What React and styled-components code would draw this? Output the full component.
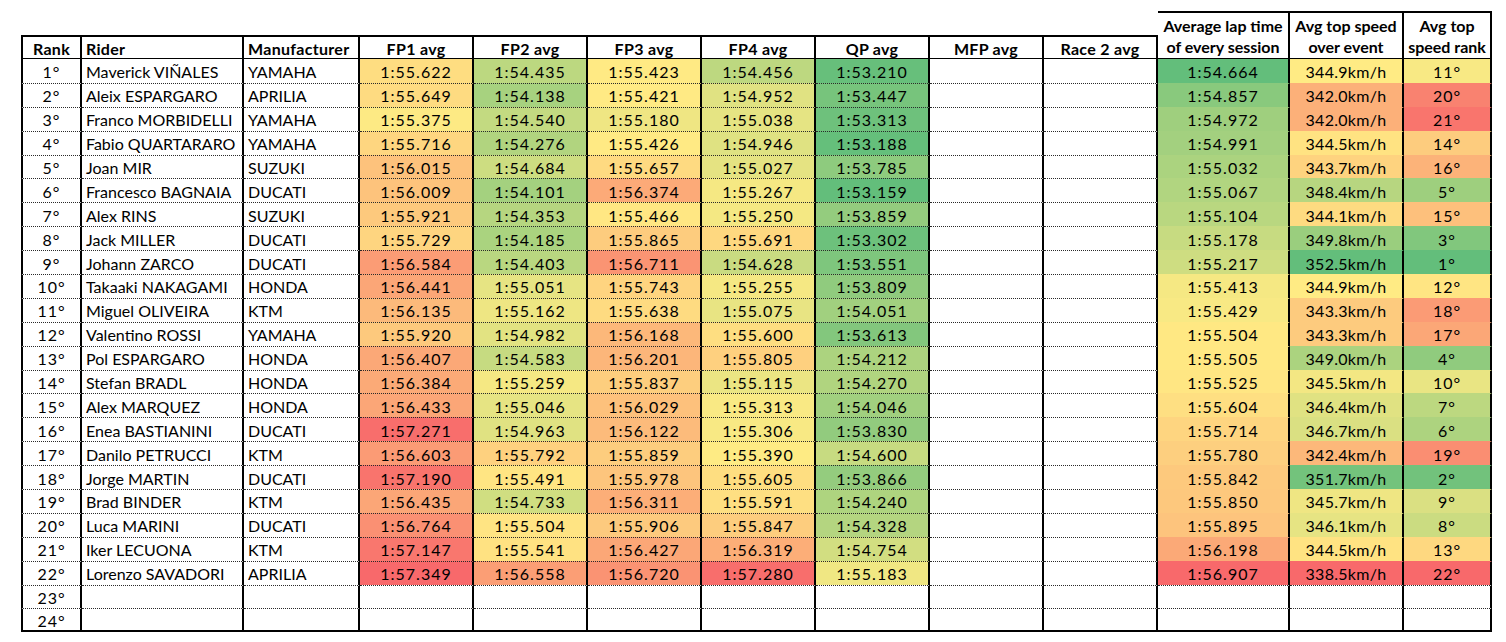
import React from "react";
import styled, { createGlobalStyle, css } from "styled-components";

const GlobalStyle = createGlobalStyle`
  html, body { margin: 0; padding: 0; background: #ffffff; }
  body { font-family: Lato, "Open Sans", Arial, sans-serif; color: #000; }
`;

const riders = [
  [1, "Maverick VIÑALES", "YAMAHA", "1:55.622", "1:54.435", "1:55.423", "1:54.456", "1:53.210", "1:54.664", "344.9", 11],
  [2, "Aleix ESPARGARO", "APRILIA", "1:55.649", "1:54.138", "1:55.421", "1:54.952", "1:53.447", "1:54.857", "342.0", 20],
  [3, "Franco MORBIDELLI", "YAMAHA", "1:55.375", "1:54.540", "1:55.180", "1:55.038", "1:53.313", "1:54.972", "342.0", 21],
  [4, "Fabio QUARTARARO", "YAMAHA", "1:55.716", "1:54.276", "1:55.426", "1:54.946", "1:53.188", "1:54.991", "344.5", 14],
  [5, "Joan MIR", "SUZUKI", "1:56.015", "1:54.684", "1:55.657", "1:55.027", "1:53.785", "1:55.032", "343.7", 16],
  [6, "Francesco BAGNAIA", "DUCATI", "1:56.009", "1:54.101", "1:56.374", "1:55.267", "1:53.159", "1:55.067", "348.4", 5],
  [7, "Alex RINS", "SUZUKI", "1:55.921", "1:54.353", "1:55.466", "1:55.250", "1:53.859", "1:55.104", "344.1", 15],
  [8, "Jack MILLER", "DUCATI", "1:55.729", "1:54.185", "1:55.865", "1:55.691", "1:53.302", "1:55.178", "349.8", 3],
  [9, "Johann ZARCO", "DUCATI", "1:56.584", "1:54.403", "1:56.711", "1:54.628", "1:53.551", "1:55.217", "352.5", 1],
  [10, "Takaaki NAKAGAMI", "HONDA", "1:56.441", "1:55.051", "1:55.743", "1:55.255", "1:53.809", "1:55.413", "344.9", 12],
  [11, "Miguel OLIVEIRA", "KTM", "1:56.135", "1:55.162", "1:55.638", "1:55.075", "1:54.051", "1:55.429", "343.3", 18],
  [12, "Valentino ROSSI", "YAMAHA", "1:55.920", "1:54.982", "1:56.168", "1:55.600", "1:53.613", "1:55.504", "343.3", 17],
  [13, "Pol ESPARGARO", "HONDA", "1:56.407", "1:54.583", "1:56.201", "1:55.805", "1:54.212", "1:55.505", "349.0", 4],
  [14, "Stefan BRADL", "HONDA", "1:56.384", "1:55.259", "1:55.837", "1:55.115", "1:54.270", "1:55.525", "345.5", 10],
  [15, "Alex MARQUEZ", "HONDA", "1:56.433", "1:55.046", "1:56.029", "1:55.313", "1:54.046", "1:55.604", "346.4", 7],
  [16, "Enea BASTIANINI", "DUCATI", "1:57.271", "1:54.963", "1:56.122", "1:55.306", "1:53.830", "1:55.714", "346.7", 6],
  [17, "Danilo PETRUCCI", "KTM", "1:56.603", "1:55.792", "1:55.859", "1:55.390", "1:54.600", "1:55.780", "342.4", 19],
  [18, "Jorge MARTIN", "DUCATI", "1:57.190", "1:55.491", "1:55.978", "1:55.605", "1:53.866", "1:55.842", "351.7", 2],
  [19, "Brad BINDER", "KTM", "1:56.435", "1:54.733", "1:56.311", "1:55.591", "1:54.240", "1:55.850", "345.7", 9],
  [20, "Luca MARINI", "DUCATI", "1:56.764", "1:55.504", "1:55.906", "1:55.847", "1:54.328", "1:55.895", "346.1", 8],
  [21, "Iker LECUONA", "KTM", "1:57.147", "1:55.541", "1:56.427", "1:56.319", "1:54.754", "1:56.198", "344.5", 13],
  [22, "Lorenzo SAVADORI", "APRILIA", "1:57.349", "1:56.558", "1:56.720", "1:57.280", "1:55.183", "1:56.907", "338.5", 22],
];

const TOTAL_ROWS = 24;

const toSec = (t) => {
  const [m, s] = t.split(":");
  return Number(m) * 60 + Number(s);
};

const median = (arr) => {
  const s = [...arr].sort((a, b) => a - b);
  const n = s.length;
  return n % 2 ? s[(n - 1) / 2] : (s[n / 2 - 1] + s[n / 2]) / 2;
};

const GREEN = [99, 190, 123];
const YELLOW = [255, 235, 132];
const RED = [248, 105, 107];

const mix = (a, b, t) => a.map((v, i) => Math.round(v + (b[i] - v) * t));

// 3-colour scale: min / median / max like a spreadsheet colour scale
const makeScale = (values, lowIsGood) => {
  const lo = Math.min(...values);
  const hi = Math.max(...values);
  const mid = median(values);
  const lowC = lowIsGood ? GREEN : RED;
  const highC = lowIsGood ? RED : GREEN;
  return (v) => {
    let c;
    if (v <= mid) c = mix(lowC, YELLOW, mid === lo ? 1 : (v - lo) / (mid - lo));
    else c = mix(YELLOW, highC, hi === mid ? 1 : (v - mid) / (hi - mid));
    return `rgb(${c[0]}, ${c[1]}, ${c[2]})`;
  };
};

const sessionValues = riders.flatMap((r) => r.slice(3, 8).map(toSec));
const sessionScale = makeScale(sessionValues, true);
const avgScale = makeScale(riders.map((r) => toSec(r[8])), true);
const speedScale = makeScale(riders.map((r) => Number(r[9])), false);
const rankScale = makeScale(riders.map((r) => r[10]), true);

const Page = styled.div`
  padding: 11px 0 0 21px;
`;

const Sheet = styled.div`
  display: grid;
  grid-template-columns: 61px 162px 116px repeat(7, 114px) 132px 114px 88px;
  grid-template-rows: 24px 24px repeat(${TOTAL_ROWS}, 23.9px);
  width: max-content;
`;

const HeaderGap = styled.div`
  grid-column: 1 / span 10;
  grid-row: 1;
`;

const alignMap = { left: "flex-start", center: "center" };

const cellBase = css`
  box-sizing: border-box;
  display: flex;
  align-items: center;
  justify-content: ${(p) => alignMap[p.$align || "center"]};
  padding: ${(p) => (p.$align === "left" ? "0 4px" : "0")};
  border-right: 2px solid #000;
  border-left: ${(p) => (p.$first ? "2px solid #000" : "none")};
  white-space: nowrap;
  overflow: hidden;
`;

const HeadCell = styled.div`
  ${cellBase};
  grid-row: ${(p) => (p.$tall ? "1 / span 2" : "2")};
  border-top: 2px solid #000;
  border-bottom: 1px solid #000;
  font-size: 16px;
  font-weight: 700;
  letter-spacing: ${(p) => (p.$tall ? "0" : "0.3px")};
  line-height: 21px;
  text-align: center;
  padding-top: 1px;
`;

const Cell = styled.div`
  ${cellBase};
  font-size: 16px;
  letter-spacing: ${(p) => p.$spacing || "0"};
  line-height: 1;
  padding-top: 2px;
  background: ${(p) => p.$bg || "transparent"};
  border-top: ${(p) =>
    p.$top === "none" ? "none" : p.$top === "clear" ? "1px solid transparent" : "1px dotted #2a2a2a"};
  border-bottom: ${(p) => (p.$bottom ? "2px solid #000" : "none")};
`;

const headers = [
  { label: "Rank", align: "center" },
  { label: "Rider", align: "left" },
  { label: "Manufacturer", align: "left" },
  { label: "FP1 avg" },
  { label: "FP2 avg" },
  { label: "FP3 avg" },
  { label: "FP4 avg" },
  { label: "QP avg" },
  { label: "MFP avg" },
  { label: "Race 2 avg" },
];

const tallHeaders = [
  ["Average lap time", "of every session"],
  ["Avg top speed", "over event"],
  ["Avg top", "speed rank"],
];

const NUM = "1px";

export default function App() {
  const rows = Array.from({ length: TOTAL_ROWS }, (_, i) => riders[i] || null);

  return (
    <Page>
      <GlobalStyle />
      <Sheet>
        <HeaderGap />
        {tallHeaders.map((lines, i) => (
          <HeadCell key={`t${i}`} $tall style={{ gridColumn: 11 + i }}>
            {lines[0]}
            <br />
            {lines[1]}
          </HeadCell>
        ))}
        {headers.map((h, i) => (
          <HeadCell key={h.label} $align={h.align} $first={i === 0} style={{ gridColumn: i + 1 }}>
            {h.label}
          </HeadCell>
        ))}

        {rows.map((r, ri) => {
          const rank = ri + 1;
          const top = ri === 0 ? "none" : "dotted";
          const bottom = ri === TOTAL_ROWS - 1;
          const prevColoured = ri > 0 && !!rows[ri - 1];
          const summaryTop = ri === 0 ? "none" : r && prevColoured ? "clear" : "dotted";
          const sessions = r ? r.slice(3, 8) : ["", "", "", "", ""];
          return (
            <React.Fragment key={rank}>
              <Cell $first $top={top} $bottom={bottom} $spacing={NUM}>
                {rank}°
              </Cell>
              <Cell $align="left" $top={top} $bottom={bottom}>
                {r ? r[1] : ""}
              </Cell>
              <Cell $align="left" $top={top} $bottom={bottom}>
                {r ? r[2] : ""}
              </Cell>
              {sessions.map((t, si) => (
                <Cell
                  key={si}
                  $top={top}
                  $bottom={bottom}
                  $spacing={NUM}
                  $bg={t ? sessionScale(toSec(t)) : undefined}
                >
                  {t}
                </Cell>
              ))}
              <Cell $top={top} $bottom={bottom} />
              <Cell $top={top} $bottom={bottom} />
              <Cell $top={summaryTop} $bottom={bottom} $spacing={NUM} $bg={r ? avgScale(toSec(r[8])) : undefined}>
                {r ? r[8] : ""}
              </Cell>
              <Cell $top={summaryTop} $bottom={bottom} $spacing="0.3px" $bg={r ? speedScale(Number(r[9])) : undefined}>
                {r ? `${r[9]}km/h` : ""}
              </Cell>
              <Cell $top={summaryTop} $bottom={bottom} $spacing={NUM} $bg={r ? rankScale(r[10]) : undefined}>
                {r ? `${r[10]}°` : ""}
              </Cell>
            </React.Fragment>
          );
        })}
      </Sheet>
    </Page>
  );
}
